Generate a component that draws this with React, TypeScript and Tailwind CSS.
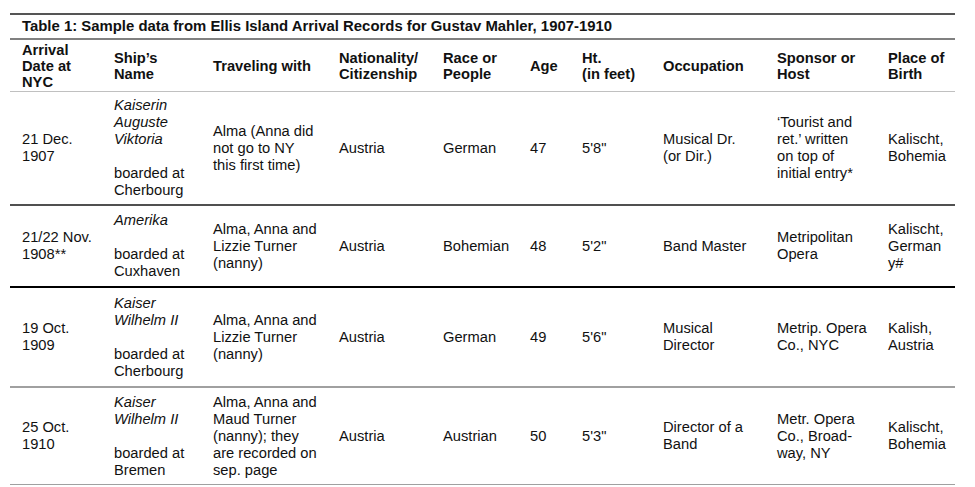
import React from "react";

const cols = "grid grid-cols-[92px_99px_126px_104px_87px_52px_81px_114px_111px_79px] items-center";

type Row = {
  date: string[];
  ship: string[];
  board: string[];
  travel: string[];
  nat: string;
  race: string;
  age: string;
  ht: string;
  occ: string[];
  sponsor: string[];
  place: string[];
  cls: string;
};

const rows: Row[] = [
  {
    date: ["21 Dec.", "1907"],
    ship: ["Kaiserin", "Auguste", "Viktoria"],
    board: ["boarded at", "Cherbourg"],
    travel: ["Alma (Anna did", "not go to NY", "this first time)"],
    nat: "Austria",
    race: "German",
    age: "47",
    ht: "5'8\"",
    occ: ["Musical Dr.", "(or Dir.)"],
    sponsor: ["\u2018Tourist and", "ret.\u2019 written", "on top of", "initial entry*"],
    place: ["Kalischt,", "Bohemia"],
    cls: "h-[114px] border-b-2 border-[#505050]",
  },
  {
    date: ["21/22 Nov.", "1908**"],
    ship: ["Amerika"],
    board: ["boarded at", "Cuxhaven"],
    travel: ["Alma, Anna and", "Lizzie Turner", "(nanny)"],
    nat: "Austria",
    race: "Bohemian",
    age: "48",
    ht: "5'2\"",
    occ: ["Band Master"],
    sponsor: ["Metripolitan", "Opera"],
    place: ["Kalischt,", "German", "y#"],
    cls: "h-[82px] border-b-2 border-black",
  },
  {
    date: ["19 Oct.", "1909"],
    ship: ["Kaiser", "Wilhelm II"],
    board: ["boarded at", "Cherbourg"],
    travel: ["Alma, Anna and", "Lizzie Turner", "(nanny)"],
    nat: "Austria",
    race: "German",
    age: "49",
    ht: "5'6\"",
    occ: ["Musical", "Director"],
    sponsor: ["Metrip. Opera", "Co., NYC"],
    place: ["Kalish,", "Austria"],
    cls: "h-[100px] border-b-2 border-[#a0a0a0]",
  },
  {
    date: ["25 Oct.", "1910"],
    ship: ["Kaiser", "Wilhelm II"],
    board: ["boarded at", "Bremen"],
    travel: ["Alma, Anna and", "Maud Turner", "(nanny); they", "are recorded on", "sep. page"],
    nat: "Austria",
    race: "Austrian",
    age: "50",
    ht: "5'3\"",
    occ: ["Director of a", "Band"],
    sponsor: ["Metr. Opera", "Co., Broad-", "way, NY"],
    place: ["Kalischt,", "Bohemia"],
    cls: "h-[97px] border-b border-[#a0a0a0]",
  },
];

function Lines({ lines }: { lines: string[] }) {
  return (
    <div className="pl-3 whitespace-nowrap">
      {lines.map((l, i) => (
        <div key={i}>{l}</div>
      ))}
    </div>
  );
}

export default function App() {
  const headers: string[][] = [
    ["Arrival", "Date at", "NYC"],
    ["Ship\u2019s", "Name"],
    ["Traveling with"],
    ["Nationality/", "Citizenship"],
    ["Race or", "People"],
    ["Age"],
    ["Ht.", "(in feet)"],
    ["Occupation"],
    ["Sponsor or", "Host"],
    ["Place of", "Birth"],
  ];
  return (
    <div
      className="w-[975px] h-[487px] bg-white pt-[13px] pl-[10px] text-[#111] text-[14.7px] leading-[17px] overflow-hidden"
      style={{ fontFamily: '"Liberation Sans", Arial, sans-serif' }}
    >
      <div className="w-[945px] border-t-2 border-[#555]">
        <div className="h-[25px] border-b-2 border-[#808080] flex items-center pl-3 font-bold whitespace-nowrap text-[14.9px]">
          Table 1: Sample data from Ellis Island Arrival Records for Gustav Mahler, 1907-1910
        </div>
        <div className={`${cols} h-[52px] border-b border-[#c0c0c0] font-bold leading-[16px]`}>
          {headers.map((h, i) => (
            <Lines key={i} lines={h} />
          ))}
        </div>
        {rows.map((r, i) => (
          <div key={i} className={`${cols} ${r.cls}`}>
            <Lines lines={r.date} />
            <div className="pl-3 whitespace-nowrap">
              {r.ship.map((s, j) => (
                <div key={j} className="italic">
                  {s}
                </div>
              ))}
              <div className="h-[17px]" />
              {r.board.map((s, j) => (
                <div key={j}>{s}</div>
              ))}
            </div>
            <Lines lines={r.travel} />
            <Lines lines={[r.nat]} />
            <Lines lines={[r.race]} />
            <Lines lines={[r.age]} />
            <Lines lines={[r.ht]} />
            <Lines lines={r.occ} />
            <Lines lines={r.sponsor} />
            <Lines lines={r.place} />
          </div>
        ))}
      </div>
    </div>
  );
}
